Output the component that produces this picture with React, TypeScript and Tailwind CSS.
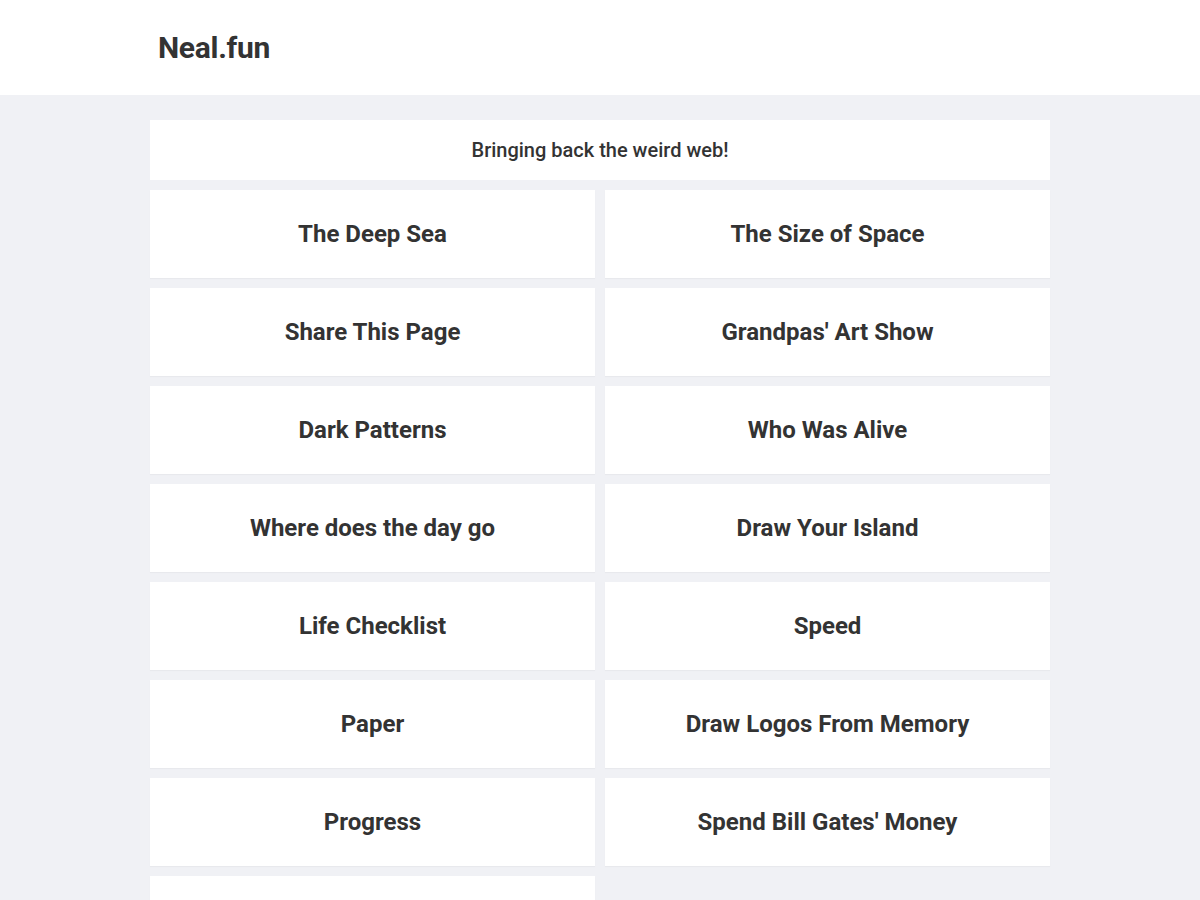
import React from 'react';

const projects = [
  'The Deep Sea',
  'The Size of Space',
  'Share This Page',
  "Grandpas' Art Show",
  'Dark Patterns',
  'Who Was Alive',
  'Where does the day go',
  'Draw Your Island',
  'Life Checklist',
  'Speed',
  'Paper',
  'Draw Logos From Memory',
  'Progress',
  "Spend Bill Gates' Money",
  'The Password Game',
];

export default function App() {
  return (
    <div className="min-h-screen bg-[#f0f1f5] font-['Roboto',sans-serif] text-[#333]">
      <header className="h-[95px] bg-white">
        <div className="mx-auto flex h-full w-[900px] items-center pl-[8px] pb-[1px]">
          <h1 className="text-[30px] font-bold tracking-[-0.3px]">Neal.fun</h1>
        </div>
      </header>

      <main className="mx-auto w-[900px] pt-[25px] pb-10">
        <div className="flex h-[60px] items-center justify-center bg-white text-[20px] font-medium">
          Bringing back the weird web!
        </div>

        <div className="mt-[10px] grid grid-cols-2 gap-[10px]">
          {projects.map((name) => (
            <a
              key={name}
              href="#"
              className="flex h-[88px] items-center justify-center bg-white text-[24px] font-bold shadow-[0_1px_1px_rgba(0,0,0,0.03)]"
            >
              {name}
            </a>
          ))}
        </div>
      </main>
    </div>
  );
}
